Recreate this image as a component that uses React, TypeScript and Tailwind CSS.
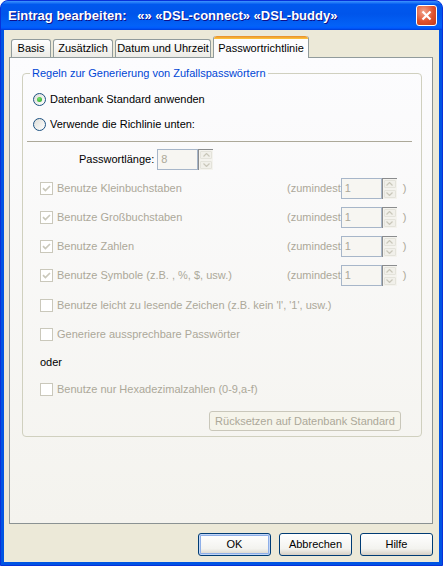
import React from "react";

const font = "font-['Liberation_Sans',Arial,sans-serif]";
const gray = "text-[#ACA899]";

function Radio({ checked }: { checked?: boolean }) {
  return (
    <span className="flex h-[13px] w-[13px] shrink-0 items-center justify-center rounded-full border border-[#1C5180] bg-[linear-gradient(135deg,#DCDCD7,#FFFFFF)]">
      {checked && (
        <span className="h-[5px] w-[5px] rounded-full bg-[radial-gradient(circle_at_40%_35%,#76E36C,#1E9F1E)]" />
      )}
    </span>
  );
}

function Checkbox({ checked }: { checked?: boolean }) {
  return (
    <span className="flex h-[13px] w-[13px] shrink-0 items-center justify-center border border-[#CAC8BB] bg-[#FFFFFF]">
      {checked && (
        <svg width="9" height="9" viewBox="0 0 9 9">
          <path d="M1 4.2 L3.4 6.6 L8 2" stroke="#CAC8BB" strokeWidth="1.7" fill="none" />
        </svg>
      )}
    </span>
  );
}

function Spinner({ h }: { h: string }) {
  return (
    <span className={`flex w-[15px] flex-col border-t border-l border-[#8A8C8E] bg-[#F4F3EE] ${h}`}>
      {[0, 1].map((i) => (
        <span
          key={i}
          className="m-[1px] flex flex-1 items-center justify-center rounded-[1px] border border-[#E4E3DB] bg-[#F1F0EA]"
        >
          <svg width="7" height="4" viewBox="0 0 7 4">
            <path
              d={i === 0 ? "M0.5 3.5 L3.5 0.5 L6.5 3.5" : "M0.5 0.5 L3.5 3.5 L6.5 0.5"}
              stroke="#C9C7BA"
              strokeWidth="1.2"
              fill="none"
            />
          </svg>
        </span>
      ))}
    </span>
  );
}

function NumBox({ value, w, h }: { value: string; w: string; h: string }) {
  return (
    <span className={`flex items-center border border-[#A7B6C9] bg-[#F7F6F2] pl-[3px] ${gray} ${w} ${h}`}>
      {value}
    </span>
  );
}

function RuleRow({ label, mt }: { label: string; mt: string }) {
  return (
    <div className={`flex h-[21px] items-center pl-[17px] ${mt}`}>
      <div className="flex w-[247px] items-center gap-[4px]">
        <Checkbox checked />
        <span className={gray}>{label}</span>
      </div>
      <span className={gray}>(zumindest</span>
      <NumBox value="1" w="w-[41px]" h="h-[21px]" />
      <Spinner h="h-[21px]" />
      <span className={`ml-[6px] ${gray}`}>)</span>
    </div>
  );
}

function PlainRow({ label, mt }: { label: string; mt: string }) {
  return (
    <div className={`flex h-[20px] items-center gap-[4px] pl-[17px] ${mt}`}>
      <Checkbox />
      <span className={gray}>{label}</span>
    </div>
  );
}

function Tab({ label, w, active }: { label: string; w: string; active?: boolean }) {
  if (active) {
    return (
      <div
        className={`relative z-10 -mb-px flex h-[22px] flex-col rounded-t-[3px] border-x border-[#919B9C] bg-[#FCFCFE] ${w}`}
      >
        <span className="h-[3px] rounded-t-[3px] bg-[linear-gradient(#E68B2C,#FFC73C)]" />
        <span className="flex flex-1 items-center justify-center text-black">{label}</span>
      </div>
    );
  }
  return (
    <div
      className={`flex h-[18px] items-center justify-center rounded-t-[3px] border-x border-t border-[#919B9C] bg-[linear-gradient(#FFFFFF,#ECEBE6)] text-black ${w}`}
    >
      {label}
    </div>
  );
}

function Button({ label, primary }: { label: string; primary?: boolean }) {
  return (
    <button
      className={`h-[23px] w-[73px] rounded-[3px] border border-[#003C74] bg-[linear-gradient(#FFFFFF,#F3F3EF_70%,#D6D0C5)] text-black ${
        primary ? "shadow-[inset_0_0_0_1px_#C2D6F7,inset_0_0_0_2px_#8EAFE8]" : ""
      }`}
    >
      {label}
    </button>
  );
}

export default function App() {
  return (
    <div className={`${font} h-[566px] w-[443px] text-[11px] leading-[13px]`}>
      <div className="flex h-full flex-col rounded-t-[8px] border border-[#0831D9] bg-[#0054E3]">
        {/* Titelleiste */}
        <div className="flex h-[29px] items-center justify-between rounded-t-[7px] bg-[linear-gradient(#3D95FF,#0058EE_12%,#0055EB_45%,#0362F7_85%,#005BFF_93%,#003DD7)] pl-[7px] pr-[5px]">
          <span className="whitespace-pre text-[13px] font-bold text-white [text-shadow:1px_1px_#0F1089]">
            {"Eintrag bearbeiten:   «» «DSL-connect» «DSL-buddy»"}
          </span>
          <span className="flex h-[21px] w-[21px] items-center justify-center rounded-[3px] border border-white bg-[radial-gradient(circle_at_35%_30%,#F2A48B,#E0512D_55%,#C13C1B)]">
            <svg width="11" height="11" viewBox="0 0 11 11">
              <path d="M1.5 1.5 L9.5 9.5 M9.5 1.5 L1.5 9.5" stroke="white" strokeWidth="2.2" />
            </svg>
          </span>
        </div>

        {/* Fensterinhalt */}
        <div className="mx-[3px] mb-[3px] flex flex-1 flex-col bg-[#ECE9D8]">
          <div className="ml-[7px] mt-[6px] flex items-end gap-[2px]">
            <Tab label="Basis" w="w-[40px]" />
            <Tab label="Zusätzlich" w="w-[60px]" />
            <Tab label="Datum und Uhrzeit" w="w-[96px]" />
            <Tab label="Passwortrichtlinie" w="w-[96px]" active />
          </div>

          <div className="ml-[5px] h-[467px] w-[424px] border border-[#919B9C] border-r-[#8A9293] border-b-[#8A9293] bg-[linear-gradient(#FCFCFE,#F4F3EE)] pl-[12px] pt-[9px]">
            <fieldset className="w-[400px] rounded-[4px] border border-[#D0D0BF] p-0 pb-[5px]">
              <legend className="ml-[7px] px-[2px] text-[#0046D5]">
                Regeln zur Generierung von Zufallspasswörtern
              </legend>

              <div className="mt-[9px] flex h-[20px] items-center gap-[4px] pl-[10px]">
                <Radio checked />
                <span className="text-black">Datenbank Standard anwenden</span>
              </div>
              <div className="mt-[5px] flex h-[20px] items-center gap-[4px] pl-[10px]">
                <Radio />
                <span className="text-black">Verwende die Richlinie unten:</span>
              </div>

              <div className="ml-[4px] mt-[7px] h-px w-[385px] bg-[#ACA899]" />

              <div className="mt-[7px] flex h-[21px] items-center pl-[56px]">
                <span className="mr-[3px] text-black">Passwortlänge:</span>
                <NumBox value="8" w="w-[41px]" h="h-[21px]" />
                <Spinner h="h-[21px]" />
              </div>

              <RuleRow label="Benutze Kleinbuchstaben" mt="mt-[8px]" />
              <RuleRow label="Benutze Großbuchstaben" mt="mt-[8px]" />
              <RuleRow label="Benutze Zahlen" mt="mt-[8px]" />
              <RuleRow label="Benutze Symbole (z.B. , %, $, usw.)" mt="mt-[8px]" />

              <PlainRow label="Benutze leicht zu lesende Zeichen (z.B. kein  'l', '1', usw.)" mt="mt-[9px]" />
              <PlainRow label="Generiere aussprechbare Passwörter" mt="mt-[9px]" />

              <div className="mt-[8px] flex h-[20px] items-center pl-[17px] text-black">oder</div>

              <PlainRow label="Benutze nur Hexadezimalzahlen (0-9,a-f)" mt="mt-[7px]" />

              <div className="mt-[12px] flex justify-end pr-[20px]">
                <button className={`h-[20px] w-[192px] rounded-[3px] border border-[#C9C7BA] bg-[#F5F4EA] ${gray}`}>
                  Rücksetzen auf Datenbank Standard
                </button>
              </div>
            </fieldset>
          </div>

          <div className="mt-[9px] flex justify-end gap-[8px] pr-[6px]">
            <Button label="OK" primary />
            <Button label="Abbrechen" />
            <Button label="Hilfe" />
          </div>
        </div>
      </div>
    </div>
  );
}
